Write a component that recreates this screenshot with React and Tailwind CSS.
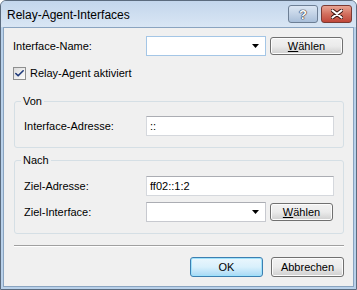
import { Check } from "lucide-react";

const font = { fontFamily: '"Liberation Sans", Arial, sans-serif' };

function Button({ children, width = "w-[73px]", height = "h-[18px]", primary = false }) {
  return (
    <button
      className={`${width} ${height} shrink-0 rounded-[3px] border text-[11px] text-black leading-none ${
        primary
          ? "border-[#3c7fb1] bg-linear-to-b from-[#eaf6fd] via-[#d9f0fc] to-[#a7d9f5] shadow-[inset_0_0_0_1px_#9fe2fb]"
          : "border-[#707070] bg-linear-to-b from-[#f2f2f2] via-[#ebebeb] to-[#cfcfcf] shadow-[inset_0_0_0_1px_#fcfcfc]"
      }`}
    >
      {children}
    </button>
  );
}

function Combo({ blue = false }) {
  return (
    <div
      className={`flex h-[20px] w-[120px] shrink-0 items-center justify-end border bg-white pr-[6px] ${
        blue ? "border-[#a4c6e6]" : "border-[#c7c9cf] border-t-[#abadb3]"
      }`}
    >
      <svg width="7" height="4" viewBox="0 0 7 4">
        <path d="M0 0h7L3.5 4z" fill="#000" />
      </svg>
    </div>
  );
}

function TextBox({ value, width = "w-[188px]" }) {
  return (
    <div className={`flex h-[20px] ${width} shrink-0 items-center border border-[#d5d8dd] border-t-[#abadb3] bg-white pl-[3px] text-[11px] text-black`}>
      {value}
    </div>
  );
}

function Group({ title, height, children }) {
  return (
    <div className={`relative ml-[1px] w-[330px] ${height} rounded-[3px] border border-[#d5dfe5] pl-[9px]`}>
      <span className="absolute -top-[7px] left-[6px] bg-[#f0f0f0] px-[2px] text-[11px] leading-[13px] text-black">
        {title}
      </span>
      {children}
    </div>
  );
}

export default function App() {
  return (
    <div
      style={font}
      className="flex h-[290px] w-[357px] flex-col overflow-hidden rounded-t-[6px] border border-[#5b6b7e] bg-[#b9d1ea]"
    >
      <div className="flex h-[26px] shrink-0 items-start bg-linear-to-b from-[#c3d6ec] to-[#d9e6f4] pl-[6px] pr-[4px]">
        <span className="mt-[7px] text-[12px] leading-[14px] text-black">Relay-Agent-Interfaces</span>
        <div className="ml-auto mt-[4px] flex gap-[3px]">
          <div className="flex h-[18px] w-[30px] items-center justify-center rounded-[3px] border border-[#6d7f95] bg-linear-to-b from-[#dbe6f3] via-[#c3d3e6] to-[#a9bfd9] text-[13px] font-bold leading-none text-white [text-shadow:0_0_1px_#223,0_0_1px_#223,0_0_1px_#223]">
            ?
          </div>
          <div className="flex h-[18px] w-[31px] items-center justify-center rounded-[3px] border border-[#7a3a33] bg-linear-to-b from-[#e8a493] via-[#d26f5e] to-[#c0463a]">
            <svg width="12" height="10" viewBox="0 0 12 10">
              <path d="M1.5 1.5l9 7M10.5 1.5l-9 7" stroke="#3b1410" strokeWidth="4" strokeLinecap="round" />
              <path d="M1.5 1.5l9 7M10.5 1.5l-9 7" stroke="#fff" strokeWidth="2.2" strokeLinecap="round" />
            </svg>
          </div>
        </div>
      </div>

      <div className="mx-[2px] mb-[2px] flex flex-1 flex-col border border-[#8aa4c0] bg-[#f0f0f0] pl-[9px] text-[11px] text-black">
        <div className="mt-[8px] flex h-[20px] items-center">
          <span className="w-[133px]">Interface-Name:</span>
          <Combo blue />
          <div className="ml-[4px]">
            <Button>
              <span className="underline">W</span>ählen
            </Button>
          </div>
        </div>

        <div className="mt-[10px] flex h-[14px] items-center gap-[4px]">
          <div className="flex h-[13px] w-[13px] items-center justify-center border border-[#8e8f8f] bg-linear-to-br from-[#dcdcdc] to-[#fdfdfd]">
            <Check size={11} strokeWidth={3.5} color="#1f3a7a" />
          </div>
          <span>Relay-Agent aktiviert</span>
        </div>

        <div className="mt-[21px]">
          <Group title="Von" height="h-[47px]">
            <div className="mt-[14px] flex h-[20px] items-center">
              <span className="w-[122px]">Interface-Adresse:</span>
              <TextBox value="::" />
            </div>
          </Group>
        </div>

        <div className="mt-[12px]">
          <Group title="Nach" height="h-[74px]">
            <div className="mt-[15px] flex h-[20px] items-center">
              <span className="w-[122px]">Ziel-Adresse:</span>
              <TextBox value="ff02::1:2" />
            </div>
            <div className="mt-[6px] flex h-[20px] items-center">
              <span className="w-[122px]">Ziel-Interface:</span>
              <Combo />
              <div className="ml-[4px]">
                <Button width="w-[63px]">
                  <span className="underline">W</span>ählen
                </Button>
              </div>
            </div>
          </Group>
        </div>

        <div className="ml-[1px] mt-[11px] h-[2px] w-[330px] border-t border-b border-t-[#a0a0a0] border-b-white" />

        <div className="ml-[1px] mt-[10px] flex w-[330px] justify-end gap-[8px]">
          <Button height="h-[20px]" primary>
            OK
          </Button>
          <Button height="h-[20px]">Abbrechen</Button>
        </div>
      </div>
    </div>
  );
}
